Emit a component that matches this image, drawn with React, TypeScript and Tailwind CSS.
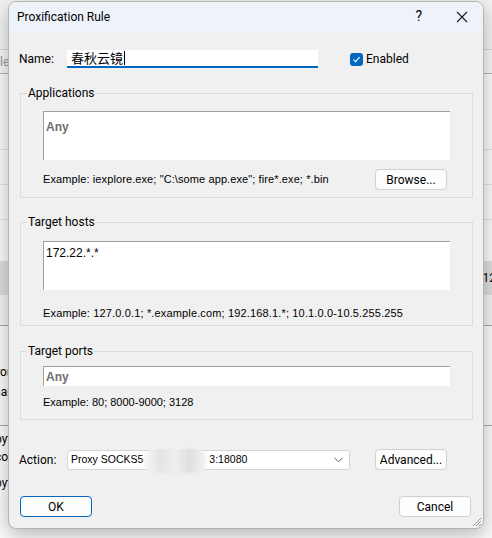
import React from "react";

const ui = "font-['Roboto','Noto_Sans',sans-serif]";
const classic = "font-['Liberation_Sans',Arial,sans-serif]";

function GroupBox({ title, className, children }: { title: string; className: string; children: React.ReactNode }) {
    return (
        <div className={`relative border border-[#dcdcdc] ${className}`}>
            <span className={`absolute -top-[9px] left-[6px] bg-[#f0f0f0] px-[1px] text-[12px] leading-[16px] text-black ${ui}`}>
                {title}
            </span>
            {children}
        </div>
    );
}

function Button({ children, primary }: { children: React.ReactNode; primary?: boolean }) {
    return (
        <div
            className={`flex h-[21px] w-[72px] items-center justify-center rounded-[4px] bg-[#fdfdfd] text-[12px] text-black ${ui} ${
                primary ? "border-[1.5px] border-[#0067c0]" : "border border-[#d0d0d0]"
            }`}
        >
            {children}
        </div>
    );
}

export default function App() {
    return (
        <div className="relative h-[538px] w-[492px] overflow-hidden bg-[#fbfbfb]">
            {/* Window behind the dialog */}
            <div className={`flex h-full flex-col text-[12px] text-black ${ui}`}>
                <div className="h-[50px] shrink-0 border-b border-[#d6d6d6] bg-[#f3f3f3]" />
                <div className="flex h-[24px] shrink-0 items-center border-b border-[#b5b5b5] bg-[#f7f7f7] text-[#9a9a9a]">
                    <span className="-ml-[14px]">Title</span>
                </div>
                <div className="h-[76px] shrink-0 border-b border-[#e3e3e3]" />
                <div className="h-[35px] shrink-0 border-b border-[#e3e3e3]" />
                <div className="h-[35px] shrink-0 border-b border-[#e3e3e3]" />
                <div className="h-[41px] shrink-0" />
                <div className="flex h-[34px] shrink-0 items-center justify-end bg-[#dedede]">
                    <span className="-mr-[4px]">12</span>
                </div>
                <div className="h-[31px] shrink-0 border-b border-[#a8a8a8] bg-[#f3f3f3]" />
                <div className="h-[36px] shrink-0" />
                <div className="-ml-[8px] leading-[20px]">from</div>
                <div className="-ml-[6px] leading-[20px]">name</div>
                <div className="h-[24px] shrink-0 border-b border-[#a8a8a8]" />
                <div className="-ml-[5px] mt-[4px] leading-[18px]">bytes</div>
                <div className="-ml-[5px] leading-[18px]">copy</div>
                <div className="-ml-[5px] mt-[8px] leading-[18px]">bytes (32.3 KB) received, lifetime &lt;1 sec</div>
            </div>

            {/* Dialog */}
            <div className="absolute left-[8px] top-[1px] flex h-[528px] w-[476px] flex-col overflow-hidden rounded-[8px] border border-[#b4b4b4] bg-[#f0f0f0] shadow-[0_6px_20px_rgba(0,0,0,0.28)]">
                <div className={`flex h-[29px] shrink-0 items-center bg-[#eef3f9] pl-[8px] pr-[15px] text-[12px] text-black ${ui}`}>
                    <span>Proxification Rule</span>
                    <span className="ml-auto text-[14px]">?</span>
                    <svg className="ml-[34px]" width="12" height="12" viewBox="0 0 12 12">
                        <path d="M1 1 L11 11 M11 1 L1 11" stroke="#1a1a1a" strokeWidth="1.1" />
                    </svg>
                </div>

                <div className="flex flex-1 flex-col pl-[11px] pr-[10px] pt-[19px]">
                    {/* Name row */}
                    <div className={`flex h-[18px] items-center text-[12px] text-black ${ui}`}>
                        <span className="-ml-[1px] w-[47px]">Name:</span>
                        <div className="ml-[1px] flex h-[18px] w-[251px] items-center border-b-2 border-[#0067c0] bg-white pl-[4px] text-[13px] font-['Noto_Sans_CJK_SC',sans-serif]">
                            <span>春秋云镜</span>
                            <span className="ml-[1px] h-[14px] w-px bg-black" />
                        </div>
                        <div className="ml-[32px] flex h-[13px] w-[13px] items-center justify-center rounded-[3px] bg-[#0067c0]">
                            <svg width="9" height="9" viewBox="0 0 9 9">
                                <path d="M1.5 4.6 L3.6 6.6 L7.6 2.2" fill="none" stroke="#fff" strokeWidth="1.2" />
                            </svg>
                        </div>
                        <span className="ml-[3px]">Enabled</span>
                    </div>

                    {/* Applications */}
                    <GroupBox title="Applications" className="mt-[25px] px-[22px] pb-[7px] pt-[17px]">
                        <div className="h-[49px] border-l border-t border-[#a0a0a0] bg-white pl-[2px] pt-[1px]">
                            <span className={`text-[12px] font-bold text-[#6e6e6e] ${classic}`}>Any</span>
                        </div>
                        <div className="mt-[9px] flex h-[21px] items-center">
                            <span className={`text-[11px] tracking-[0.1px] text-black ${classic}`}>
                                Example: iexplore.exe; "C:\some app.exe"; fire*.exe; *.bin
                            </span>
                            <div className="ml-auto mr-[3px]">
                                <Button>Browse...</Button>
                            </div>
                        </div>
                    </GroupBox>

                    {/* Target hosts */}
                    <GroupBox title="Target hosts" className="mt-[24px] px-[22px] pb-[4px] pt-[18px]">
                        <div className={`h-[49px] border-l border-t border-[#a0a0a0] bg-white pl-[2px] pt-[2px] text-[12px] text-black ${classic}`}>
                            172.22.*.*
                        </div>
                        <div className={`mt-[15px] h-[16px] text-[11px] leading-[16px] tracking-[0.15px] text-black ${classic}`}>
                            Example: 127.0.0.1; *.example.com; 192.168.1.*; 10.1.0.0-10.5.255.255
                        </div>
                    </GroupBox>

                    {/* Target ports */}
                    <GroupBox title="Target ports" className="mt-[25px] px-[22px] pb-[9px] pt-[14px]">
                        <div className="flex h-[20px] items-center border-l border-t border-[#a0a0a0] bg-white pl-[2px]">
                            <span className={`text-[12px] font-bold text-[#6e6e6e] ${classic}`}>Any</span>
                        </div>
                        <div className={`mt-[8px] h-[16px] text-[11px] leading-[16px] text-black ${classic}`}>
                            Example: 80; 8000-9000; 3128
                        </div>
                    </GroupBox>

                    {/* Action row */}
                    <div className={`mt-[29px] flex h-[21px] items-center text-[12px] text-black ${ui}`}>
                        <span className="-ml-[1px] w-[47px]">Action:</span>
                        <div className="relative ml-[1px] flex h-[20px] w-[283px] items-center rounded-[3px] border border-[#d5d5d5] bg-white pl-[3px] pr-[6px]">
                            <span className={`text-[10.5px] ${classic}`}>Proxy SOCKS5</span>
                            <span className={`ml-[66px] text-[10.5px] ${classic}`}>3:18080</span>
                            <svg className="ml-auto" width="9" height="6" viewBox="0 0 9 6">
                                <path d="M0.5 0.8 L4.5 4.8 L8.5 0.8" fill="none" stroke="#606060" strokeWidth="1" />
                            </svg>
                            <div className="absolute left-[76px] top-[-2px] h-[24px] w-[63px] rounded-[10px] bg-[linear-gradient(90deg,#f8f8f8,#e4e4e4_25%,#eeeeee_50%,#dedede_72%,#f6f6f6)] blur-[1.5px]" />
                        </div>
                        <div className="ml-[25px]">
                            <Button>Advanced...</Button>
                        </div>
                    </div>

                    {/* OK / Cancel */}
                    <div className="mt-[26px] flex items-center justify-between pr-[2px]">
                        <Button primary>OK</Button>
                        <Button>Cancel</Button>
                    </div>
                </div>

                <svg className="absolute bottom-[1px] right-[1px]" width="11" height="11" viewBox="0 0 11 11">
                    <path d="M10 2 L2 10 M10 5 L5 10 M10 8 L8 10" stroke="#9a9a9a" strokeWidth="1" />
                </svg>
            </div>
        </div>
    );
}
